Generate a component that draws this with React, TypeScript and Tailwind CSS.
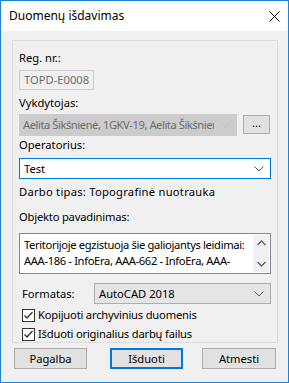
import React from "react"

function Chevron({ color = "#606060" }: { color?: string }) {
  return (
    <svg width="10" height="6" viewBox="0 0 10 6" className="shrink-0">
      <path d="M0.5 0.5 L5 5 L9.5 0.5" fill="none" stroke={color} strokeWidth="1" />
    </svg>
  )
}

function CheckBox() {
  return (
    <span className="w-[13px] h-[13px] border border-[#333333] bg-white flex items-center justify-center shrink-0">
      <svg width="11" height="11" viewBox="0 0 11 11">
        <path d="M1.5 5.5 L4 8 L9.5 2" fill="none" stroke="#333333" strokeWidth="1.3" />
      </svg>
    </span>
  )
}

export default function App() {
  return (
    <div className="w-[289px] h-[383px] border border-[#1883d7] flex flex-col bg-[#f0f0f0] text-[11.2px] leading-[16px] text-black font-['Noto_Sans',sans-serif]">
      {/* Title bar */}
      <div className="h-[30px] bg-white flex items-center justify-between pl-[8px] pr-[7px] shrink-0">
        <span className="text-[12px]">Duomenų išdavimas</span>
        <svg width="11" height="11" viewBox="0 0 11 11" className="mr-[1px]">
          <path d="M0.5 0.5 L10.5 10.5 M10.5 0.5 L0.5 10.5" stroke="#000" strokeWidth="1" />
        </svg>
      </div>

      <div className="flex-1 flex flex-col">
        {/* Group panel */}
        <div className="mt-[9px] ml-[11px] mr-[10px] border border-[#dcdcdc] px-[6px] pt-[9px] pb-0 h-[303px]">
          <div>Reg. nr.:</div>
          <div className="mt-[4px] w-[75px] h-[20px] border border-[#cccccc] bg-[#f0f0f0] text-[#6d6d6d] flex items-center px-[4px] whitespace-nowrap">
            TOPD-E0008
          </div>

          <div className="mt-[5px]">Vykdytojas:</div>
          <div className="mt-[3px] flex items-start">
            <div className="w-[218px] h-[22px] border border-[#cccccc] bg-[#cccccc] text-[#6d6d6d] flex items-center justify-between pl-[3px] pr-[6px] overflow-hidden">
              <span className="whitespace-nowrap overflow-hidden tracking-[-0.45px]">Aelita Šikšnienė, 1GKV-19, Aelita Šikšnier</span>
              <span className="ml-[6px]"><Chevron color="#bfbfbf" /></span>
            </div>
            <div className="ml-[6px] mt-[1px] w-[27px] h-[19px] border border-[#adadad] bg-[#e1e1e1] flex items-center justify-center leading-[10px] pb-[3px]">
              ...
            </div>
          </div>

          <div className="mt-[1px]">Operatorius:</div>
          <div className="mt-[5px] w-[252px] h-[21px] border border-[#0078d7] bg-white flex items-center justify-between pl-[4px] pr-[6px]">
            <span>Test</span>
            <Chevron />
          </div>

          <div className="mt-[5px] whitespace-nowrap tracking-[0.25px]">Darbo tipas: Topografinė nuotrauka</div>
          <div className="mt-[9px] tracking-[-0.2px]">Objekto pavadinimas:</div>

          <div className="mt-[8px] w-[252px] h-[41px] border border-[#828790] bg-white flex">
            <div className="flex-1 pl-[4px] pt-[3px] leading-[16px] overflow-hidden tracking-[-0.35px]">
              <div className="whitespace-nowrap">Teritorijoje egzistuoja šie galiojantys leidimai:</div>
              <div className="whitespace-nowrap">AAA-186 - InfoEra, AAA-662 - InfoEra, AAA-</div>
            </div>
            <div className="w-[16px] my-[1px] mr-[1px] bg-[#f0f0f0] flex flex-col items-center justify-between py-[5px] shrink-0">
              <svg width="9" height="6" viewBox="0 0 9 6">
                <path d="M0.5 5 L4.5 1 L8.5 5" fill="none" stroke="#606060" strokeWidth="1.4" />
              </svg>
              <svg width="9" height="6" viewBox="0 0 9 6">
                <path d="M0.5 1 L4.5 5 L8.5 1" fill="none" stroke="#606060" strokeWidth="1.4" />
              </svg>
            </div>
          </div>

          <div className="mt-[9px] flex items-center">
            <span className="w-[75px] pl-[3px]">Formatas:</span>
            <div className="w-[177px] h-[21px] border border-[#adadad] bg-[#e5e5e5] flex items-center justify-between pl-[4px] pr-[6px]">
              <span>AutoCAD 2018</span>
              <Chevron />
            </div>
          </div>

          <div className="mt-[3px] flex items-center gap-[3px] pl-[3px] h-[16px]">
            <CheckBox />
            <span className="tracking-[-0.2px]">Kopijuoti archyvinius duomenis</span>
          </div>
          <div className="mt-[3px] flex items-center gap-[3px] pl-[3px] h-[16px]">
            <CheckBox />
            <span className="tracking-[-0.2px]">Išduoti originalius darbų failus</span>
          </div>
        </div>

        {/* Buttons */}
        <div className="mt-[5px] flex pl-[13px]">
          <div className="w-[73px] h-[21px] border border-[#adadad] bg-[#e1e1e1] flex items-center justify-center">Pagalba</div>
          <div className="ml-[23px] w-[73px] h-[21px] border-2 border-[#0078d7] bg-[#e1e1e1] flex items-center justify-center">Išduoti</div>
          <div className="ml-[19px] w-[74px] h-[21px] border border-[#adadad] bg-[#e1e1e1] flex items-center justify-center">Atmesti</div>
        </div>
      </div>
    </div>
  )
}
